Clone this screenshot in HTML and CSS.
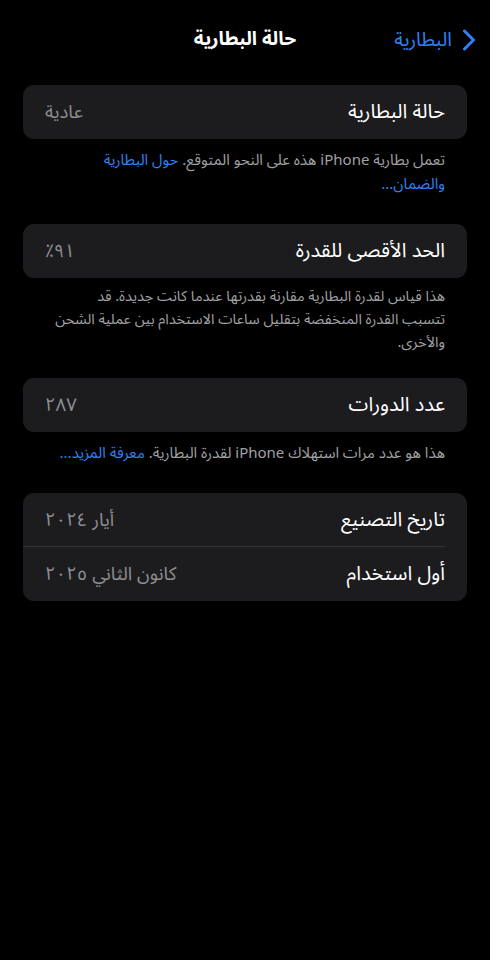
FILE: index.html
```html
<!DOCTYPE html>
<html lang="ar" dir="rtl">
<head>
<meta charset="utf-8">
<link rel="stylesheet" href="styles.css">
</head>
<body>
<div class="screen">
  <header class="nav">
    <a class="back">
      <svg class="chev" width="14" height="22" viewBox="0 0 14 22"><path d="M2.5 2 L11.5 11 L2.5 20" fill="none" stroke="#2f82f5" stroke-width="3" stroke-linecap="round" stroke-linejoin="round"/></svg>
      <span>البطارية</span>
    </a>
    <h1 class="title">حالة البطارية</h1>
  </header>

  <section class="group">
    <div class="card">
      <div class="row"><span class="label">حالة البطارية</span><span class="value">عادية</span></div>
    </div>
    <p class="foot">تعمل بطارية iPhone هذه على النحو المتوقع. <a class="link">حول البطارية والضمان...</a></p>
  </section>

  <section class="group tight">
    <div class="card">
      <div class="row"><span class="label">الحد الأقصى للقدرة</span><span class="value">٩١٪</span></div>
    </div>
    <p class="foot">هذا قياس لقدرة البطارية مقارنة بقدرتها عندما كانت جديدة. قد<br>تتسبب القدرة المنخفضة بتقليل ساعات الاستخدام بين عملية الشحن والأخرى.</p>
  </section>

  <section class="group">
    <div class="card">
      <div class="row"><span class="label">عدد الدورات</span><span class="value">٢٨٧</span></div>
    </div>
    <p class="foot">هذا هو عدد مرات استهلاك iPhone لقدرة البطارية. <a class="link">معرفة المزيد...</a></p>
  </section>

  <section class="group">
    <div class="card">
      <div class="row sep"><span class="label">تاريخ التصنيع</span><span class="value">أيار ٢٠٢٤</span></div>
      <div class="row"><span class="label">أول استخدام</span><span class="value">كانون الثاني ٢٠٢٥</span></div>
    </div>
  </section>
</div>
</body>
</html>
```
FILE: styles.css
```css
html, body {
  margin: 0;
  padding: 0;
  background: #000;
}
body {
  font-family: "Noto Sans Arabic", "Noto Naskh Arabic", "DejaVu Sans", "Noto Sans", sans-serif;
  color: #fff;
  width: 490px;
  height: 960px;
}
.screen {
  padding: 0 23px;
}
.nav {
  position: relative;
  height: 80px;
  display: flex;
  align-items: center;
  justify-content: center;
  margin-bottom: 5px;
}
.title {
  margin: 0;
  font-size: 19px;
  font-weight: 700;
  padding-bottom: 2px;
}
.back {
  position: absolute;
  right: -9px;
  top: 0;
  height: 80px;
  display: flex;
  align-items: center;
  gap: 10px;
  color: #2f82f5;
  font-size: 19.5px;
}
.back span {
  padding-bottom: 2px;
}
.chev {
  display: block;
}
.group {
  margin-bottom: 28px;
}
.group.tight {
  margin-bottom: 24px;
}
.card {
  background: #1c1c1e;
  border-radius: 11px;
}
.row {
  height: 54px;
  display: flex;
  align-items: center;
  justify-content: space-between;
  padding: 0 22px;
  position: relative;
}
.row.sep::after {
  content: "";
  position: absolute;
  bottom: 0;
  right: 22px;
  left: 0;
  height: 1px;
  background: #333336;
}
.label {
  font-size: 20px;
  color: #fff;
}
.value {
  font-size: 18.5px;
  color: #8e8e93;
}
.foot {
  margin: 9px 0 0;
  padding: 0 22px;
  font-size: 15px;
  line-height: 24px;
  color: #a0a0a5;
}
.group.tight .foot {
  margin-top: 7px;
  line-height: 23px;
  font-size: 14.5px;
  padding-left: 8px;
}
.link {
  color: #2f82f5;
}
```
